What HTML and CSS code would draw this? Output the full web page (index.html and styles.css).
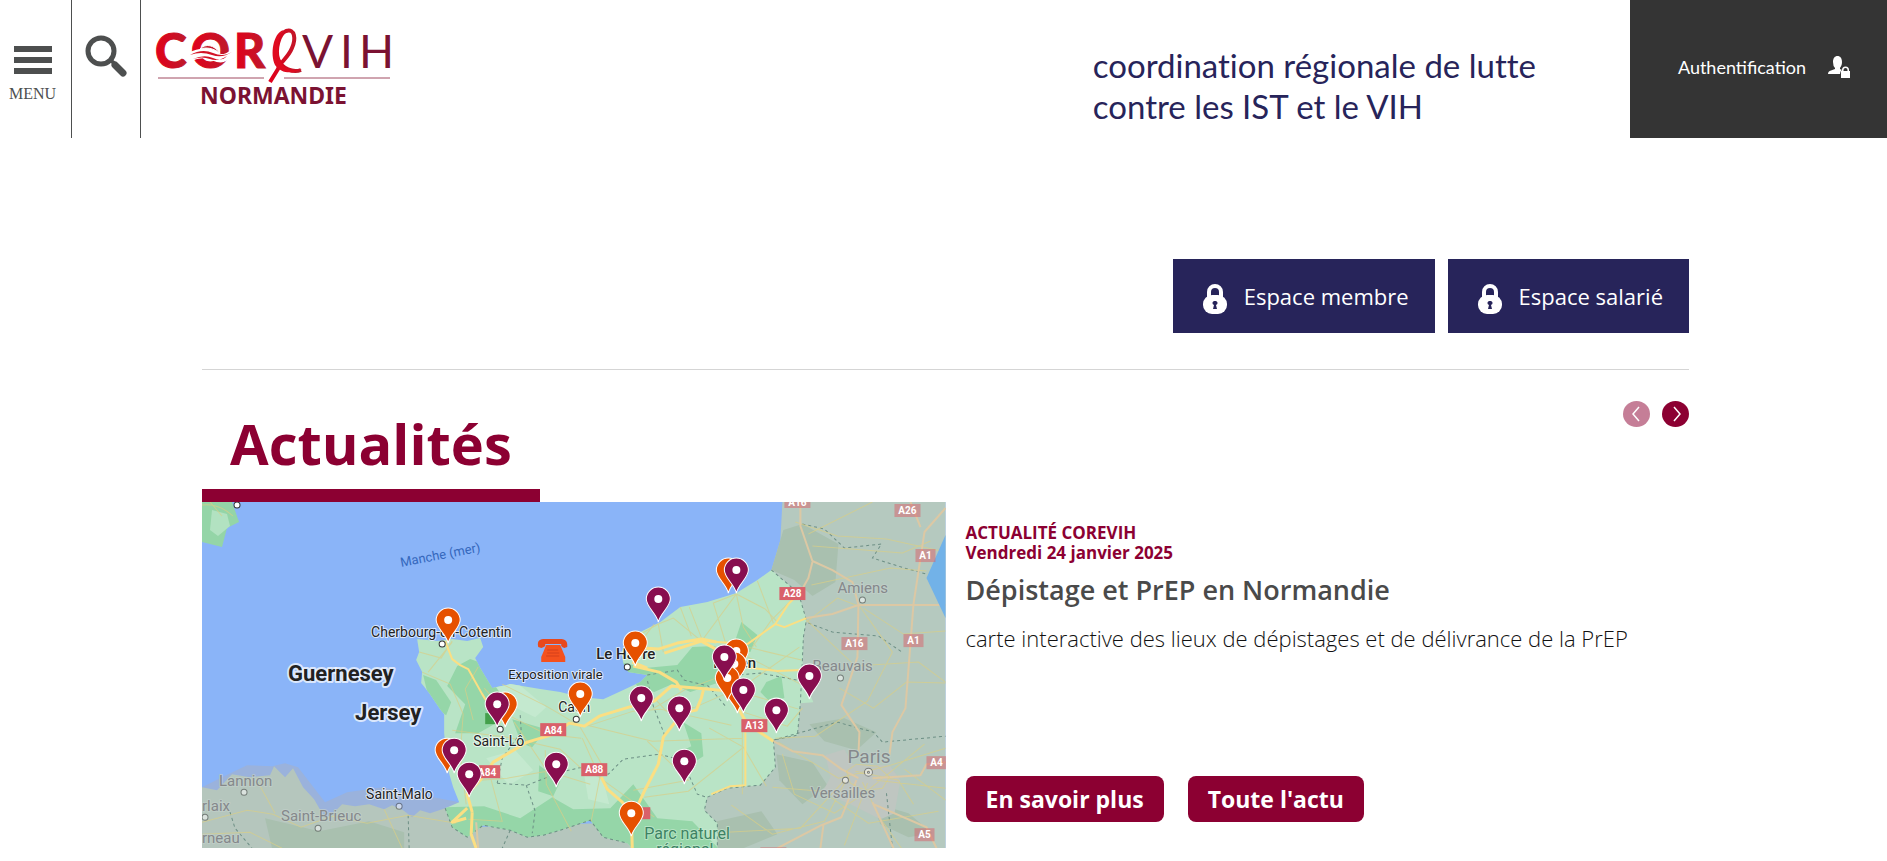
FILE: index.html
```html
<!DOCTYPE html>
<html lang="fr">
<head>
    <meta charset="UTF-8">
    <title>COREVIH Normandie</title>
    <link rel="stylesheet" href="styles.css">
</head>
<body>

<header class="header">
    <button class="menu-btn" type="button">
        <span class="bars"><i></i><i></i><i></i></span>
        MENU
    </button>
    <button class="search-btn" type="button" aria-label="Rechercher">
        <svg width="44" height="44" viewBox="0 0 44 44">
            <circle cx="17" cy="17" r="13" fill="none" stroke="#4d4f4f" stroke-width="5"/>
            <path d="M26 26L30 29" stroke="#4d4f4f" stroke-width="4"/>
            <path d="M31 31L39 39" stroke="#4d4f4f" stroke-width="7" stroke-linecap="round"/>
        </svg>
    </button>
    <a class="logo" href="#" aria-label="COREVIH Normandie">
        <svg width="238" height="80" viewBox="0 0 238 80">
            <defs>
                <linearGradient id="red" x1="0" x2="1">
                    <stop offset="0" stop-color="#e2001a"/>
                    <stop offset="1" stop-color="#bd1a2c"/>
                </linearGradient>
            </defs>
            <g class="logo-red">
                <text x="-1" y="40">C</text>
                <text x="35" y="40">O</text>
                <text x="78" y="40">R</text>
            </g>
            <path d="M44 21C50 15 58 17 64 25C57 20 50 19 44 21Z" fill="#c5162a" stroke="#fff" stroke-width="1"/>
            <path d="M34 27Q47 20 57 26T76 24M34 31Q46 25 57 30T72 27" fill="none" stroke="#fff" stroke-width="5"/>
            <path d="M34 27Q46 20 57 25T77 23Q67 31 56 27T34 27ZM37 31Q48 26 57 30T71 28Q62 34 54 31T37 31Z" fill="#d31226"/>
            <path d="M145 42C137 45 126 41 122 31C119 21 123 6 130 3C139 0 140 11 136 20C132 30 124 34 122 41L114 54" fill="none" stroke="url(#red)" stroke-width="4"/>
            <path d="M119 37C114 26 117 6 127 2C121 11 120 26 126 36C131 43 139 43 146 41C137 46 125 46 119 37Z" fill="#e00b20"/>
            <g class="logo-light">
                <text x="146" y="40">V</text>
                <text x="184" y="40">I</text>
                <text x="203" y="40">H</text>
            </g>
            <path d="M2 50H108M128 50H234" stroke="#a04a60" stroke-width="1"/>
            <text class="logo-region" x="44" y="76">NORMANDIE</text>
        </svg>
    </a>
    <p class="tagline">coordination régionale de lutte<br>contre les IST et le VIH</p>
    <a class="auth" href="#">
        Authentification
        <svg width="22" height="23" viewBox="0 0 22 23" fill="#fff">
            <path d="M5 6C5 2 7 0 9.500 0S14 2 14 6C14 9 13 10 12 12V13L14 14Q12 15 12 18H0Q0 15 3 14.500L7 13V12Q5 10 5 6Z"/>
            <path d="M13 15H14V14A3.500 3.500 0 0 1 21 14V15H22V22H13ZM15.500 15H19.500V14A2 2 0 0 0 15.500 14Z" fill-rule="evenodd"/>
        </svg>
    </a>
</header>

<main class="content">
    <nav class="spaces">
        <a class="space" href="#">
            <svg width="24" height="32" viewBox="0 0 24 32"><path class="shackle" d="M6 16V9a6 6 0 0 1 12 0v7"/><rect y="12" width="24" height="19" rx="9"/><path class="keyhole" d="M12 18a2 2 0 0 1 1 4l1 4h-4l1-4a2 2 0 0 1 1-4z"/></svg>
            Espace membre
        </a>
        <a class="space" href="#">
            <svg width="24" height="32" viewBox="0 0 24 32"><path class="shackle" d="M6 16V9a6 6 0 0 1 12 0v7"/><rect y="12" width="24" height="19" rx="9"/><path class="keyhole" d="M12 18a2 2 0 0 1 1 4l1 4h-4l1-4a2 2 0 0 1 1-4z"/></svg>
            Espace salarié
        </a>
    </nav>

    <section class="news">
        <div class="news-head">
            <h1>Actualités</h1>
            <div class="arrows">
                <button type="button" aria-label="Précédent" disabled>
                    <svg width="26" height="26" viewBox="0 0 26 26"><path d="M15 6L9 13L15 20"/></svg>
                </button>
                <button type="button" aria-label="Suivant">
                    <svg width="26" height="26" viewBox="0 0 26 26"><path d="M11 6L17 13L11 20"/></svg>
                </button>
            </div>
        </div>

        <article class="card">
            <svg class="map" viewBox="0 0 743 346" preserveAspectRatio="xMidYMid slice">
                <defs>
                    <g id="pin">
                        <path d="M0 23C-2 14-12 8-12 0A12 12 0 0 1 12 0C12 8 2 14 0 23Z" stroke="#fff" stroke-width="1"/>
                        <circle r="4" fill="#fff"/>
                    </g>
                    <clipPath id="region">
                        <path id="normandy" d="M215 137L217 150L214 158L220 170L219 181L227 191L238 207L242 212L242 231L246 268L251 285L257 300L243 306L250 325L265 335L281 323L308 328L325 335L341 333L358 328L388 318L401 335L425 341L430 346H515L515 321L502 308L505 295L525 286L558 283L573 265L571 238L595 233L598 201L611 200L600 175L601 135L604 118L596 91L569 68L555 78L534 91L505 100L478 105L458 120L428 135L419 150L421 161L426 170L445 173L438 180L421 188L401 197L378 195L358 190L338 187L308 182L290 186L278 166L273 156L281 145L278 136L265 139L250 137L235 139Z"/>
                    </clipPath>
                </defs>
                <rect width="743" height="346" fill="#8ab4f8"/>
                <path d="M0 0H30L37 20L25 26L20 45L0 40Z" fill="#94d5a7"/>
                <path d="M10 8L25 12L28 24L16 34L8 28Z" fill="#b2e2c1"/>
                <path d="M0 3Q17 1 31 14M8 0L20 14" class="road"/>

                <!-- zones hors Normandie -->
                <path d="M0 285L20 275L45 263L70 264L83 261L96 265L123 300L145 290L180 285L257 300V330H0Z" fill="#9ab2dc"/>
                <path d="M0 285L15 288L30 272L48 275L68 273L72 264L83 275L91 266L101 285L112 297L123 316L132 310L140 302L153 304L167 302L182 307L190 303L201 308L210 315L218 308L228 311L243 306L265 325L430 320V346H0Z" fill="#b5c6bd"/>
                <path d="M580 0L578 38L569 68L500 230L425 346H743V0Z" fill="#b5c9bf"/>
                <g fill="#a9c0af">
                    <path d="M581 28L600 22L636 42L633 80L610 94L592 78L569 68Z"/>
                    <path d="M607 222L642 216L674 230L654 248L622 239Z"/>
                    <path d="M574 252L610 260L625 283L600 302L577 278Z"/>
                    <path d="M669 300L706 311L730 331L706 335L678 322Z"/>
                    <path d="M510 320L559 309L575 332L541 346H514Z"/>
                    <path d="M63 316L117 329L167 319L202 330V346H70Z"/>
                </g>
                <path d="M623 253L642 247L650 262L687 263L698 278L692 311L678 317L650 303L620 290L628 275Z" fill="#bfc6c1"/>

                <use href="#normandy" fill="#b9e4c6"/>
                <g clip-path="url(#region)">
                    <g fill="#95d6a8">
                        <path d="M268 157L285 163L303 195L292 222L276 231H253L263 202L245 184L255 164Z"/>
                        <path d="M221 173L234 178L249 200L244 213L228 202Z"/>
                        <path d="M418 160L443 166L475 163L490 145L513 144L518 180L488 190L470 182L452 190L435 184Z"/>
                        <path d="M539 120L555 133L548 150L530 147Z"/>
                        <path d="M564 180L579 174L582 196L567 199L558 190Z"/>
                        <path d="M481 220L499 231L501 254L481 267L470 253L489 244Z"/>
                        <path d="M242 305L282 304L318 316L350 295L371 307L408 306L431 282L455 316L490 319L516 346H254Z"/>
                        <path d="M337 263L358 279L351 294L336 289Z"/>
                        <path d="M310 217L344 227L330 245L319 241Z"/>
                    </g>
                    <g fill="#c4e9cf">
                        <path d="M288 177L315 181L344 205L333 215L306 202Z"/>
                        <path d="M284 256L313 248L331 268L307 283Z"/>
                        <path d="M381 267L401 278L407 302L386 297Z"/>
                    </g>
                </g>

                <!-- limites -->
                <g class="border">
                    <path d="M569 68L596 91L604 118L601 135L598 201L595 233L571 238L573 265L558 283L525 286L505 295L502 308L515 321V346"/>
                    <path d="M243 306L250 325L265 335L281 323L308 328L325 335L341 333L358 328L388 318L401 335L425 341"/>
                    <path d="M295 281L325 283L358 270L380 265L406 272L421 257L457 252L462 232L451 204L445 178"/>
                    <path d="M318 213L319 230L300 256L295 281M324 283L333 309L330 331M457 252L480 258L495 292L504 295"/>
                    <path d="M445 173L475 168L482 178L506 184L524 205M520 174L558 171L600 179"/>
                    <path d="M600 22L622 27L642 46L679 42L670 56L702 66L724 72M606 121L630 130L676 134L701 151M571 238L635 220L671 230L680 240L743 234"/>
                    <path d="M28 310L33 326L50 346M206 313L207 346M308 328L300 346M684 291L690 346"/>
                </g>

                <!-- routes -->
                <g class="road">
                    <path d="M0 320L45 308L71 312L99 325L130 314L165 321L206 313L254 321M0 332L48 330L80 346M56 280L73 311M182 307L200 346"/>
                    <path d="M217 150L239 156L250 139M220 170L248 182L261 212L258 252L264 302M226 170L250 140M276 165L263 187L271 218M250 228L305 235L358 247L382 269"/>
                    <path d="M300 182L344 204L378 224M282 186L306 213L344 232L379 236M312 220L345 269L388 282M345 269L305 276L264 279M343 248L344 282L369 329M289 278L300 319L266 317M380 236L398 276L452 315"/>
                    <path d="M378 225L400 263L389 319M385 223L450 239L540 236M385 224L431 209L458 207L529 223M445 239L486 278L431 288M540 188V292M540 246L486 289L442 295M507 226L541 245L564 284"/>
                    <path d="M424 140L456 122L471 116L498 138M456 122L461 150M478 105L489 134M487 105L500 138L534 92L541 125L554 145M534 92L511 101L523 140M534 92L563 107L575 120M555 79L571 121M452 122L434 145M595 92L569 118L550 145"/>
                    <path d="M545 145L599 158M540 185L597 145M539 190L596 207M541 210L585 224L600 206M540 152L598 182M524 172L482 188L450 207M441 184L464 209L493 205L527 190"/>
                    <path d="M606 32L670 0M610 44L700 51L728 39M593 20L635 34L684 37L743 50M609 83L688 66L724 69M602 116L653 164L716 160L743 180M604 120L635 96L656 104M657 104L690 150L665 199L613 234L573 236M661 106L701 132L743 129M637 186L671 206L704 180L743 181M576 240L636 276L688 263L743 246M580 252L592 292L632 311L664 290M570 285L619 289L666 321L736 309M529 303L570 332L622 319L643 279M653 269L696 278L711 302M660 280L677 315L699 346M667 287L722 242M642 278L598 326L524 330M665 281L642 343M674 278L743 286M702 267L743 298"/>
                </g>
                <g class="main-road">
                    <path d="M243 139L250 157L258 163L266 167L280 192L298 221" class="thin"/>
                    <path d="M270 310L265 292L278 278L291 260L325 240L352 232L367 221L382 224L397 214L430 204L452 199L469 184L505 187L526 189L545 222L571 239"/>
                    <path d="M270 310L269 332L274 346M265 306L250 320L264 316M429 312L430 346M431 313L443 287L456 262L461 235L480 211L494 208L499 196L501 188M399 275L405 287L420 300L429 311"/>
                    <path d="M425 145L456 147L475 141L499 137L514 140M431 164L457 170L474 180L479 188M430 160L445 166M462 151L499 139L519 150L531 163"/>
                    <path d="M500 139L545 142L573 122L586 102L596 92M573 122L582 125L604 116M543 142L542 165L575 169L600 168" class="thin"/>
                    <path d="M509 292L528 284L543 283V230" class="thin"/>
                    <path d="M598 0V24L610 59L630 68L650 80L656 103L655 155L639 203L657 230L656 252M604 116L630 112L656 103H743M743 6L722 30L711 102L703 206L690 230L687 253" class="pale"/>
                    <path d="M571 239L590 249L620 253L639 267L656 276M597 92L606 76L610 60M654 278L639 315L619 323L575 346M621 323L618 346M670 300L691 346M671 302L724 325L734 346M670 276L718 273L724 262L743 260M708 0L718 25" class="pale"/>
                    <path d="M274 320L276 346" class="pale"/>
                </g>
                <path d="M644 269L654 262L675 264L687 275L680 286L662 288L648 281Z" class="road"/>
                <path d="M743 33L724 76L743 116Z" fill="#72b2e8"/>
                <path d="M283 211h12v11h-12z" fill="#43a04b"/>

                <g class="town">
                    <circle cx="35" cy="3" r="3"/><circle cx="240" cy="142" r="3"/><circle cx="298" cy="227" r="3"/>
                    <circle cx="374" cy="217" r="3"/><circle cx="425" cy="165" r="3"/>
                    <g opacity="0.5">
                        <circle cx="42" cy="290" r="3"/><circle cx="3" cy="315" r="3"/><circle cx="116" cy="326" r="3"/>
                        <circle cx="197" cy="304" r="3"/><circle cx="660" cy="98" r="3"/><circle cx="638" cy="176" r="3"/>
                        <circle cx="643" cy="278" r="3"/><circle cx="666" cy="270" r="4"/><circle cx="666" cy="270" r="1"/>
                    </g>
                </g>

                <g class="shield">
                    <rect x="338" y="221" width="26" height="13"/><rect x="277" y="263" width="21" height="13"/>
                    <rect x="379" y="261" width="26" height="13"/><rect x="539" y="217" width="26" height="13"/>
                    <rect x="577" y="85" width="26" height="13"/><rect x="436" y="305" width="12" height="12"/>
                    <g opacity="0.5">
                        <rect x="582" y="-6" width="26" height="12"/><rect x="692" y="2" width="26" height="13"/>
                        <rect x="713" y="47" width="20" height="13"/><rect x="639" y="135" width="26" height="13"/>
                        <rect x="701" y="132" width="20" height="13"/><rect x="724" y="254" width="20" height="13"/>
                        <rect x="712" y="326" width="20" height="13"/><rect x="558" y="345" width="26" height="8"/>
                    </g>
                    <text x="351" y="232">A84</text><text x="285" y="274">A84</text><text x="392" y="271">A88</text>
                    <text x="552" y="227">A13</text><text x="590" y="95">A28</text>
                    <text x="595" y="4">A16</text><text x="705" y="12">A26</text><text x="723" y="57">A1</text>
                    <text x="652" y="145">A16</text><text x="711" y="142">A1</text><text x="734" y="264">A4</text>
                    <text x="722" y="336">A5</text>
                </g>

                <g class="label">
                    <text x="169" y="135">Cherbourg-en-Cotentin</text>
                    <text x="271" y="244">Saint-Lô</text>
                    <text x="306" y="177" class="small">Exposition virale</text>
                    <text x="356" y="210">Caen</text>
                    <text x="394" y="157" class="city">Le Havre</text>
                    <text x="511" y="166" class="city">Rouen</text>
                    <text x="164" y="297">Saint-Malo</text>
                    <text x="86" y="179" class="island">Guernesey</text>
                    <text x="153" y="218" class="island">Jersey</text>
                    <g class="far">
                        <text x="17" y="284">Lannion</text>
                        <text x="0" y="309">rlaix</text>
                        <text x="0" y="341">rneau</text>
                        <text x="79" y="319">Saint-Brieuc</text>
                        <text x="635" y="91">Amiens</text>
                        <text x="610" y="169">Beauvais</text>
                        <text x="608" y="296">Versailles</text>
                        <text x="645" y="261" class="capital">Paris</text>
                    </g>
                    <g class="park">
                        <text x="442" y="337">Parc naturel</text>
                        <text x="454" y="353">régional</text>
                    </g>
                </g>
                <text class="sea" transform="translate(199 65) rotate(-11)">Manche (mer)</text>

                <path d="M336 145C334 135 341 137 350 137S366 135 365 145Q361 147 359 144V142H343V144Q340 147 336 145Z" fill="#e8481c"/>
                <path d="M344 143H358L363 155V160H339V155Z" fill="#f4511e"/>
                <path d="M345 148h11M345 151h12M344 154h13" stroke="#d4401a"/>

                <g fill="#e65100">
                    <use href="#pin" x="246" y="118"/><use href="#pin" x="303" y="202"/><use href="#pin" x="245" y="248"/>
                    <use href="#pin" x="378" y="192"/><use href="#pin" x="526" y="68"/><use href="#pin" x="433" y="141"/>
                    <use href="#pin" x="534" y="149"/><use href="#pin" x="532" y="162"/><use href="#pin" x="535" y="188"/>
                    <use href="#pin" x="525" y="176"/><use href="#pin" x="429" y="311"/>
                </g>
                <g fill="#880e4f">
                    <use href="#pin" x="295" y="202"/><use href="#pin" x="252" y="248"/><use href="#pin" x="267" y="272"/>
                    <use href="#pin" x="354" y="262"/><use href="#pin" x="534" y="68"/><use href="#pin" x="456" y="97"/>
                    <use href="#pin" x="522" y="155"/><use href="#pin" x="541" y="188"/><use href="#pin" x="607" y="174"/>
                    <use href="#pin" x="574" y="208"/><use href="#pin" x="439" y="196"/><use href="#pin" x="477" y="206"/>
                    <use href="#pin" x="482" y="259"/>
                </g>
            </svg>

            <div class="card-body">
                <p class="meta">ACTUALITÉ COREVIH<br>Vendredi 24 janvier 2025</p>
                <h2>Dépistage et PrEP en Normandie</h2>
                <p class="intro">carte interactive des lieux de dépistages et de délivrance de la PrEP</p>
                <div class="actions">
                    <a class="btn" href="#">En savoir plus</a>
                    <a class="btn" href="#">Toute l'actu</a>
                </div>
            </div>
        </article>
    </section>
</main>

</body>
</html>
```
FILE: styles.css
```css
* {
    box-sizing: border-box;
}
body {
    margin: 0;
    background: #fff;
    font-family: "Open Sans", sans-serif;
    color: #222;
}
h1, h2, p {
    margin: 0;
}
a {
    text-decoration: none;
}
button {
    border: 0;
    padding: 0;
    background: none;
    cursor: pointer;
}

/* header */
.header {
    display: flex;
    height: 138px;
}
.menu-btn, .search-btn {
    display: flex;
    flex-direction: column;
    align-items: center;
    border-right: 1px solid #4d4f4f;
}
.menu-btn {
    width: 72px;
    padding: 46px 6px 0 0;
    gap: 10px;
    font: 16px/20px "Liberation Serif", serif;
    color: #4d4f4f;
}
.bars {
    display: grid;
    gap: 5px;
}
.bars i {
    width: 38px;
    height: 6px;
    background: #4d4f4f;
}
.search-btn {
    width: 69px;
    padding-top: 34px;
}
.logo {
    padding: 28px 0 0 15px;
}
.logo svg {
    overflow: visible;
}
.logo-red text {
    font: 900 48px Lato, sans-serif;
    fill: url(#red);
    stroke: url(#red);
    stroke-width: 1;
}
.logo-light text {
    font: 400 46px Lato, sans-serif;
    fill: #7b1232;
}
.logo-region {
    font: 700 23px "Noto Sans", sans-serif;
    fill: #7b1232;
}
.tagline {
    margin-left: auto;
    padding: 45px 94px 0 0;
    font-family: Lato, sans-serif;
    font-size: 33px;
    font-variant-ligatures: none;
    line-height: 41px;
    color: #27245a;
}
.auth {
    display: flex;
    align-items: center;
    gap: 22px;
    padding: 0 37px 4px 48px;
    background: #343434;
    color: #fff;
    font-family: Lato, sans-serif;
    font-size: 18px;
}

/* contenu */
.content {
    padding: 121px 198px 13px 202px;
}
.spaces {
    display: flex;
    justify-content: flex-end;
    gap: 13px;
    padding-bottom: 36px;
    border-bottom: 1px solid #d5d5d5;
}
.space {
    display: flex;
    align-items: center;
    gap: 17px;
    height: 74px;
    padding: 0 26px 0 30px;
    background: #27245a;
    color: #fff;
    font-size: 22px;
}
.space svg {
    margin-top: 6px;
    fill: #fff;
}
.space .shackle {
    fill: none;
    stroke: #fff;
    stroke-width: 4;
}
.space .keyhole {
    fill: #27245a;
}
.news-head {
    display: flex;
    justify-content: space-between;
    align-items: flex-start;
}
.news-head h1 {
    margin-top: 35px;
    padding: 0 28px 8px;
    border-bottom: 13px solid #8c0032;
    color: #8c0032;
    font-size: 56px;
    line-height: 76px;
}
.arrows {
    display: flex;
    gap: 12px;
    margin-top: 31px;
}
.arrows button {
    width: 27px;
    height: 26px;
    border-radius: 50%;
    background: #8c0032;
}
.arrows button:disabled {
    opacity: 0.5;
}
.arrows path {
    fill: none;
    stroke: #fff;
    stroke-width: 1.5;
}
.card {
    display: grid;
    grid-template-columns: 1fr 1fr;
}
.map {
    display: block;
    width: 100%;
    font-family: Roboto, sans-serif;
}
.card-body {
    display: flex;
    flex-direction: column;
    padding: 21px 20px 26px;
}
.meta {
    color: #8c0032;
    font-size: 17px;
    font-weight: 700;
    line-height: 20px;
}
.card-body h2 {
    margin-top: 11px;
    color: #4a4a4a;
    font-size: 27px;
    font-weight: 600;
    line-height: 32px;
}
.intro {
    margin-top: 20px;
    font-size: 22px;
    line-height: 24px;
    font-weight: 300;
    color: #111;
}
.actions {
    display: flex;
    gap: 24px;
    margin-top: auto;
}
.btn {
    padding: 0 20px;
    border-radius: 8px;
    background: #8c0032;
    color: #fff;
    font-size: 23px;
    font-weight: 700;
    line-height: 46px;
}

/* carte */
.road {
    fill: none;
    stroke: #d9cf88;
    stroke-width: 1;
    opacity: 0.7;
}
.main-road {
    fill: none;
    stroke: #fbdf83;
    stroke-width: 3;
    stroke-linejoin: round;
}
.main-road .thin {
    stroke-width: 2;
}
.main-road .pale {
    stroke: #dcc8a4;
    stroke-width: 2;
}
.border {
    fill: none;
    stroke: #6d8f85;
    stroke-dasharray: 3 3;
}
.town {
    fill: #fff;
    stroke: #333;
    stroke-width: 1;
}
.shield rect {
    fill: #d9606a;
}
.shield text {
    fill: #fff;
    font-size: 10px;
    font-weight: 700;
    text-anchor: middle;
}
.label text {
    font-size: 14px;
    fill: #222;
    stroke: #fff;
    stroke-opacity: 0.7;
    stroke-width: 2;
    stroke-linejoin: round;
    paint-order: stroke;
}
.label .small {
    font-size: 13px;
}
.label .city {
    font-size: 15px;
    font-weight: 500;
}
.label .island {
    font-size: 22px;
    font-weight: 700;
    stroke-width: 4;
}
.label .far text {
    font-size: 15px;
    fill: #85888b;
    stroke: #c3d0cb;
}
.label .far .capital {
    font-size: 19px;
}
.label .park text {
    font-size: 16px;
    fill: #3d8263;
    stroke: #c5ead0;
}
.sea {
    font-size: 13px;
    fill: #3568bd;
}
```
